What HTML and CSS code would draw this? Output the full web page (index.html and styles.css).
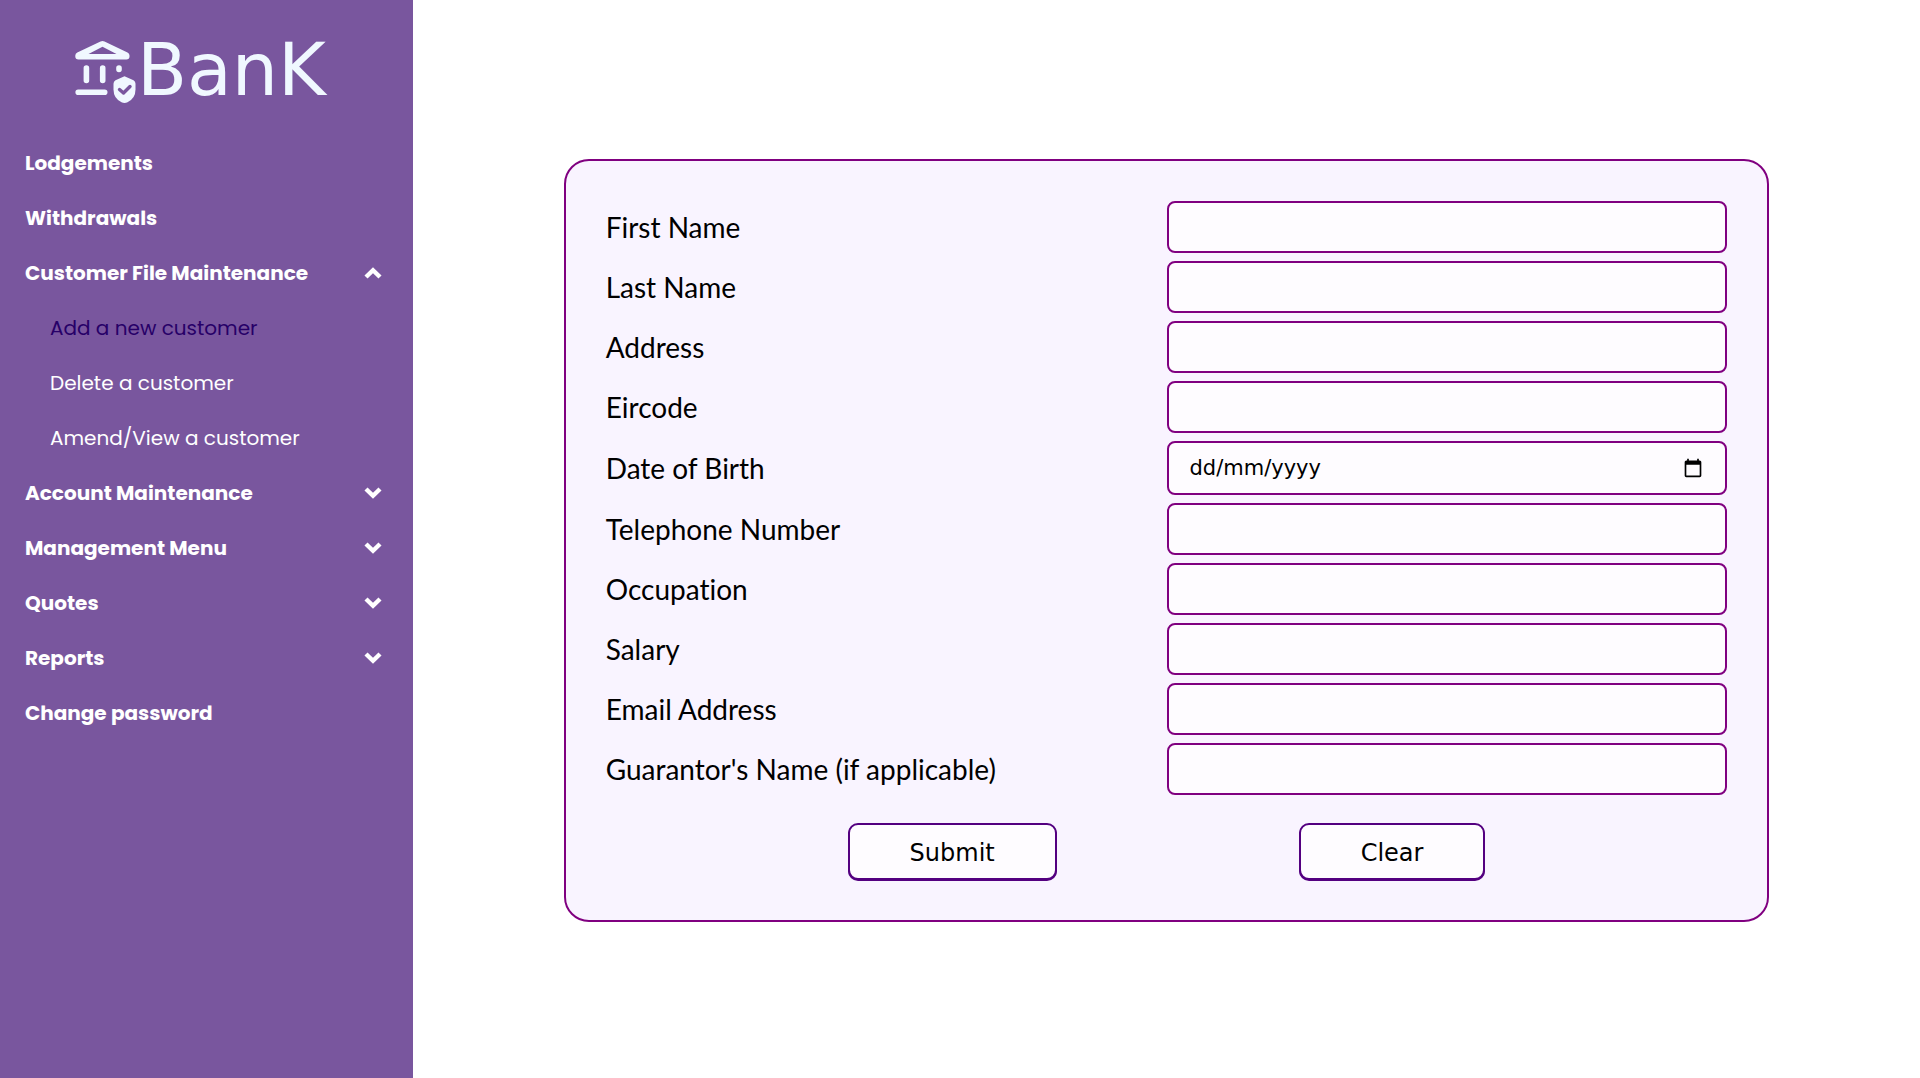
FILE: index.html
```html
<!DOCTYPE html>
<html lang="en-GB">
<head>
<meta charset="utf-8">
<meta name="viewport" content="width=device-width, initial-scale=1">
<title>BanK - Add a new customer</title>
<link rel="stylesheet" href="styles.css">
</head>
<body>
<svg class="symbols" aria-hidden="true">
  <symbol id="chevron" viewBox="0 0 18 12"><path d="M2 2 9 8.800l7-6.800" fill="none" stroke="currentColor" stroke-width="4.400"/></symbol>
</svg>
<div class="layout">
  <aside class="sidebar">
    <a class="brand" href="#">
      <svg class="brand-icon" viewBox="0 0 62 62" aria-hidden="true">
        <path fill="currentColor" fill-rule="evenodd" d="M25.500 .400q2-.7 4 0L52.500 11.500q2 1 2 3v1q0 3-3.200 3H3.500q-3.200 0-3.200-3v-1q0-2 2-3zM27.500 5.800 13.500 13h28z"/>
        <path fill="none" stroke="currentColor" stroke-width="5.600" stroke-linecap="round" d="M11.400 27v12.500M27.700 27v12.500M44 27v1.500M3.200 51.300h26.500"/>
        <path fill="currentColor" d="M49.500 35.300l9 4q2 1 2 3.500v6q0 8.500-8 12.500-3 1.300-6 0-8-4-8-12.500v-6q0-2.500 2-3.500z"/>
        <path class="brand-check" fill="none" stroke-width="3.400" stroke-linecap="round" stroke-linejoin="round" d="M44.500 48.500l4 3.500 6.500-6.500"/>
      </svg>
      <span>BanK</span>
    </a>
    <nav class="menu" aria-label="Main">
      <a class="menu-item" href="#">Lodgements</a>
      <a class="menu-item" href="#">Withdrawals</a>
      <button class="menu-item" type="button" aria-expanded="true">Customer File Maintenance <svg class="chevron chevron-up" aria-hidden="true"><use href="#chevron"/></svg></button>
      <a class="menu-item sub-item active" href="#">Add a new customer</a>
      <a class="menu-item sub-item" href="#">Delete a customer</a>
      <a class="menu-item sub-item" href="#">Amend/View a customer</a>
      <button class="menu-item" type="button" aria-expanded="false">Account Maintenance <svg class="chevron" aria-hidden="true"><use href="#chevron"/></svg></button>
      <button class="menu-item" type="button" aria-expanded="false">Management Menu <svg class="chevron" aria-hidden="true"><use href="#chevron"/></svg></button>
      <button class="menu-item" type="button" aria-expanded="false">Quotes <svg class="chevron" aria-hidden="true"><use href="#chevron"/></svg></button>
      <button class="menu-item" type="button" aria-expanded="false">Reports <svg class="chevron" aria-hidden="true"><use href="#chevron"/></svg></button>
      <a class="menu-item" href="#">Change password</a>
    </nav>
  </aside>
  <main class="content">
    <form class="card">
      <div class="field"><label for="first-name">First Name</label><input id="first-name" type="text"></div>
      <div class="field"><label for="last-name">Last Name</label><input id="last-name" type="text"></div>
      <div class="field"><label for="address">Address</label><input id="address" type="text"></div>
      <div class="field"><label for="eircode">Eircode</label><input id="eircode" type="text"></div>
      <div class="field">
        <label for="dob">Date of Birth</label>
        <div class="date-box">
          <input id="dob" type="text" inputmode="numeric" placeholder="dd/mm/yyyy">
          <button class="date-picker" type="button" aria-label="Choose date">
            <svg viewBox="0 0 24 24" aria-hidden="true"><path d="M20 3h-1V1h-2v2H7V1H5v2H4c-1.100 0-2 .900-2 2v16c0 1.100.9 2 2 2h16c1.100 0 2-.9 2-2V5c0-1.100-.9-2-2-2zm0 18H4V8h16z"/></svg>
          </button>
        </div>
      </div>
      <div class="field"><label for="phone">Telephone Number</label><input id="phone" type="tel"></div>
      <div class="field"><label for="occupation">Occupation</label><input id="occupation" type="text"></div>
      <div class="field"><label for="salary">Salary</label><input id="salary" type="text"></div>
      <div class="field"><label for="email">Email Address</label><input id="email" type="email"></div>
      <div class="field"><label for="guarantor">Guarantor's Name (if applicable)</label><input id="guarantor" type="text"></div>
      <div class="actions">
        <button class="button" type="submit">Submit</button>
        <button class="button" type="reset">Clear</button>
      </div>
    </form>
  </main>
</div>
</body>
</html>
```

FILE: styles.css
```css
* {
  box-sizing: border-box;
}

body {
  margin: 0;
  background: #fff;
  color: #000;
}

.symbols {
  display: none;
}

.layout {
  display: flex;
  min-height: 100vh;
}

.sidebar {
  flex: 0 0 413px;
  padding: 26px 0;
  background: #79569e;
  color: #fff;
}

.brand {
  display: flex;
  align-items: center;
  height: 88px;
  margin: 0 75px 21px;
  color: #f0f8ff;
  font: 73px/88px "DejaVu Sans", Verdana, sans-serif;
  text-decoration: none;
}

.brand-icon {
  flex: none;
  width: 62px;
  height: 62px;
  margin-top: 4px;
}

.brand-check {
  stroke: #79569e;
}

.menu {
  display: flex;
  flex-direction: column;
}

.menu-item {
  display: flex;
  align-items: center;
  justify-content: space-between;
  width: 100%;
  height: 55px;
  padding: 0 31px 0 25px;
  border: 0;
  background: none;
  color: inherit;
  font: 700 20px/30px Poppins, Inter, sans-serif;
  text-align: left;
  text-decoration: none;
}

.sub-item {
  padding-left: 50px;
  font-weight: 400;
}

.active {
  color: #270068;
}

.chevron {
  width: 18px;
  height: 12px;
}

.chevron-up {
  transform: rotate(180deg);
}

.content {
  display: flex;
  flex: 1;
  align-items: center;
  justify-content: center;
  padding-top: 3px;
}

.card {
  display: flex;
  flex-direction: column;
  gap: 8px;
  width: 80%;
  padding: 40px;
  border: 2px solid purple;
  border-radius: 25px;
  background: #f9f4ff;
}

.field {
  display: grid;
  grid-template-columns: 1fr 1fr;
  align-items: center;
}

.field label {
  font: 28px/36px Lato, sans-serif;
  font-variant-ligatures: none;
}

.field input {
  width: 100%;
  height: 52px;
  padding: 12px 21px;
  border: 2px solid purple;
  border-radius: 8px;
  background: #fefcff;
  color: #000;
  font: 21px/24px "DejaVu Sans", Verdana, sans-serif;
}

.date-box {
  position: relative;
}

.field .date-box input {
  display: block;
  height: 54px;
  padding-right: 56px;
}

.date-box input::placeholder {
  color: #000;
  opacity: 1;
}

.date-picker {
  position: absolute;
  top: 0;
  right: 24px;
  display: flex;
  align-items: center;
  height: 100%;
  padding: 0;
  border: 0;
  background: none;
}

.date-picker svg {
  width: 20px;
  height: 20px;
}

.actions {
  display: flex;
  justify-content: space-evenly;
  padding-top: 20px;
}

.button {
  padding: 14px 60px 10px;
  border: 2px solid #540080;
  border-radius: 10px;
  background: #fefcff;
  box-shadow: 0 1px 0 #540080;
  color: #000;
  font: 24px/29px "DejaVu Sans", Verdana, sans-serif;
}
```
